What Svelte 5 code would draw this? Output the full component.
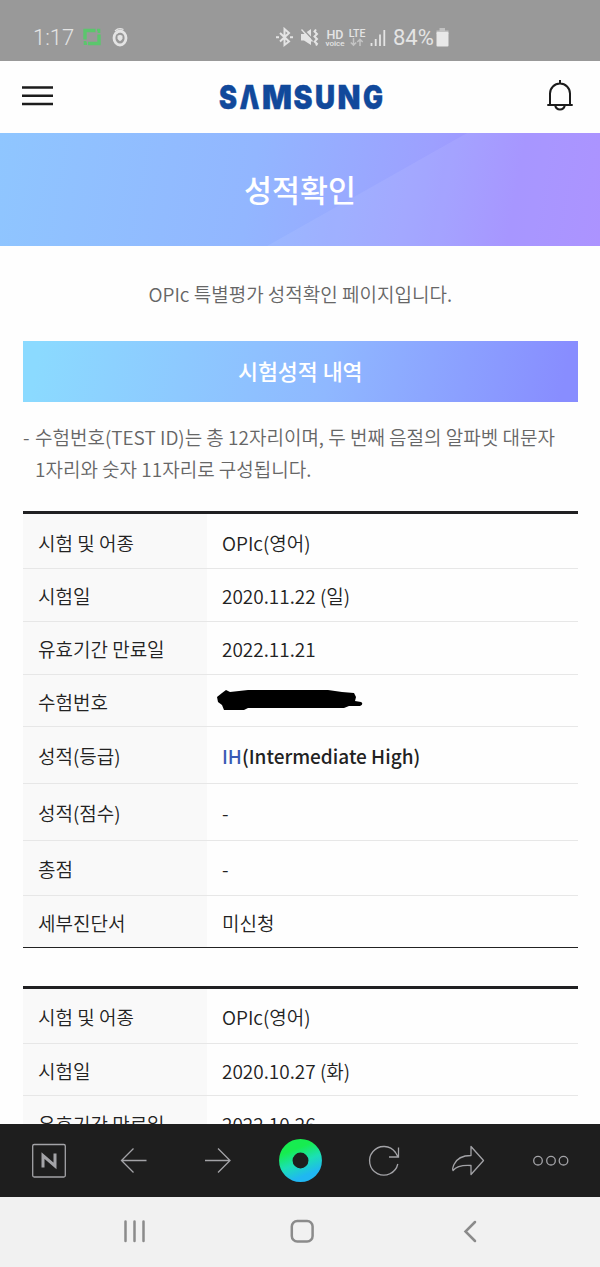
<script>
    // Each result becomes one table, height is the row height in px
    let results = [
        [
            { label: '시험 및 어종', value: 'OPIc(영어)', height: 55 },
            { label: '시험일', value: '2020.11.22 (일)', height: 52.5 },
            { label: '유효기간 만료일', value: '2022.11.21', height: 53 },
            { label: '수험번호', hidden: true, height: 52.5 },
            { label: '성적(등급)', grade: 'IH', value: '(Intermediate High)', height: 56.5 },
            { label: '성적(점수)', value: '-', height: 57 },
            { label: '총점', value: '-', height: 55 },
            { label: '세부진단서', value: '미신청', height: 52.5 }
        ],
        [
            { label: '시험 및 어종', value: 'OPIc(영어)', height: 54.5 },
            { label: '시험일', value: '2020.10.27 (화)', height: 52.5 },
            { label: '유효기간 만료일', value: '2022.10.26', height: 53 }
        ]
    ];
</script>

<div class="screen">
    <div class="status-bar">
        <span class="time">1:17</span>
        <svg class="status-left" width="60" height="22" viewBox="0 0 60 22">
            <path d="M4 12.500V3.500H14.500M7 16.500H18V7.500" fill="none" stroke="#5bc66d" stroke-width="3.400" />
            <path d="M4 14V16.800H6M16 3H18V6" fill="none" stroke="#5bc66d" stroke-width="2.600" />
            <ellipse cx="39" cy="11" rx="6" ry="7" fill="none" stroke="#e4e4e4" stroke-width="2.800" />
            <path d="M34 4C37 1 39 1 42.500 2.500M35.500 6.500C38 4 41 4 43 6" fill="none" stroke="#e4e4e4" stroke-width="1.300" />
            <path d="M36.500 8.700L39 7.700L41.500 8.700V11.500Q41 13.300 39 14.200Q37 13.300 36.500 11.500Z" fill="#e4e4e4" />
        </svg>
        <svg class="status-icons" width="58" height="22" viewBox="0 0 58 22">
            <g fill="none" stroke="#e4e4e4" stroke-width="2">
                <path d="M4 6L13 14.500L8.500 18V2L13 6L4 14.500" />
                <path d="M0 10.200H3M14 10.200H17" />
                <path d="M40 2.500L38.500 4.500L41 7L38.500 9.500L41 12L38.500 14.500L41 17L40 18.500" />
            </g>
            <path d="M25 7H28L35 2V18L28 13.500H25Z" fill="#e4e4e4" />
            <path d="M26.500 1.500L38 14" stroke="#999" stroke-width="1.500" />
            <path d="M25.500 2.500L36.500 14.500" stroke="#e4e4e4" stroke-width="1.300" />
        </svg>
        <div class="hd">
            <b>HD</b>
            <span>voice</span>
        </div>
        <div class="lte">
            <b>LTE</b>
            <svg width="14" height="9" viewBox="0 0 14 9">
                <path d="M3.500 0V7M.8 4.500L3.500 7.200L6.200 4.500M10 8V1.500M7.300 4L10 1.300L12.700 4" fill="none" stroke="#c4c4c4" stroke-width="1.500" />
            </svg>
        </div>
        <svg class="signal" width="16" height="18" viewBox="0 0 16 18">
            <path d="M1.500 14V17M5.700 10V17M10 5.500V17M14.300 1V17" stroke="#e4e4e4" stroke-width="1.800" />
        </svg>
        <span class="percent">84%</span>
        <svg class="battery" width="13" height="19" viewBox="0 0 13 19">
            <path d="M3.500 0H9V2.500H12.500V6H.5V2.500H3.500Z" fill="#c2c2c2" />
            <rect x=".5" y="4" width="12" height="14.500" rx="1" fill="#e8e8e8" />
        </svg>
    </div>

    <header>
        <svg width="32" height="20" viewBox="0 0 32 20">
            <path d="M0 1.500H31M0 9.700H31M0 17.900H31" stroke="#1c1c1c" stroke-width="2.500" />
        </svg>
        <svg class="logo" width="168" height="50" viewBox="0 0 168 50">
            <g class="logo-text" font-size="32.500" fill="#11499b" stroke="#11499b" stroke-width=".4">
                <text x="2" y="37.500" textLength="18" lengthAdjust="spacingAndGlyphs">S</text>
                <text x="22.500" y="37.500" textLength="20" lengthAdjust="spacingAndGlyphs">Λ</text>
                <text x="45" y="37.500" textLength="30" lengthAdjust="spacingAndGlyphs">M</text>
                <text x="76.500" y="37.500" textLength="19" lengthAdjust="spacingAndGlyphs">S</text>
                <text x="98" y="37.500" textLength="20" lengthAdjust="spacingAndGlyphs">U</text>
                <text x="120.500" y="37.500" textLength="23" lengthAdjust="spacingAndGlyphs">N</text>
                <text x="146" y="37.500" textLength="20" lengthAdjust="spacingAndGlyphs">G</text>
            </g>
        </svg>
        <svg class="bell" width="26" height="32" viewBox="0 0 26 32">
            <g fill="none" stroke="#1c1c1c" stroke-width="2">
                <path d="M3 25V13.500A10 10 0 0 1 23 13.500V25M13 0V4M.3 25H25.700" />
                <path d="M8.200 25.500A4.900 4.900 0 0 0 17.800 25.500" />
            </g>
        </svg>
    </header>

    <div class="banner">
        <svg width="600" height="113" viewBox="0 0 600 113">
            <path d="M267 113L467 0H600V113Z" fill="#fff" fill-opacity=".07" />
        </svg>
        <h1>성적확인</h1>
    </div>

    <main>
        <p class="intro">OPIc 특별평가 성적확인 페이지입니다.</p>
        <h2>시험성적 내역</h2>
        <div class="note">
            <span class="dash">-</span>
            <p>수험번호(TEST ID)는 총 12자리이며, 두 번째 음절의 알파벳 대문자<br />1자리와 숫자 11자리로 구성됩니다.</p>
        </div>

        {#each results as rows}
            <div class="result">
                {#each rows as row}
                    <div class="row" style="height: {row.height}px">
                        <div class="label">{row.label}</div>
                        <div class="value" class:strong={row.grade}>
                            {#if row.hidden}
                                <svg class="marker" width="148" height="22" viewBox="0 0 148 22">
                                    <path d="M1 8L6 4L10 1L14 3L32 1H100L112 1L126 3L138 4L140 8L139 12L145 13Q148 15 144 17H133L128 19L32 19L28 21H8L6 16L2 13Z" fill="#000" />
                                </svg>
                            {:else}
                                {#if row.grade}<span class="grade">{row.grade}</span>{/if}{row.value}
                            {/if}
                        </div>
                    </div>
                {/each}
            </div>
        {/each}
    </main>

    <nav class="toolbar">
        <svg width="600" height="73" viewBox="0 0 600 73">
            <defs>
                <linearGradient id="ring" x1=".3" y1="0" x2=".7" y2="1">
                    <stop offset=".1" stop-color="#17ec50" />
                    <stop offset=".55" stop-color="#1be0b5" />
                    <stop offset="1" stop-color="#20b7f2" />
                </linearGradient>
            </defs>
            <g fill="none" stroke="#a3a3a7" stroke-width="1.300">
                <rect x="32.700" y="20.500" width="32.600" height="32.500" rx="1.500" />
                <path d="M146.500 36.500H121.500M133.500 24.500L121.500 36.500L133.500 48.500" />
                <path d="M205 36.500H230M218 24.500L230 36.500L218 48.500" />
                <path d="M397.800 40A14.300 14.300 0 1 1 395.500 28.500L398 32.800M398.500 23.500V33H389" />
                <path d="M471 22.500L483.500 36.500L471 50.500V41.500C463 41 457 41.500 453 46.500Q452 45 454 40.500C457 34 462 31.500 471 31.500Z" stroke-linejoin="round" />
                <circle cx="538" cy="36.700" r="4.300" />
                <circle cx="551" cy="36.700" r="4.300" />
                <circle cx="563.500" cy="36.700" r="4.300" />
            </g>
            <path d="M43 43.500V31.500L55 42V29.500" fill="none" stroke="#a3a3a7" stroke-width="3" />
            <circle cx="300.500" cy="36.500" r="14.700" fill="none" stroke="url(#ring)" stroke-width="13.500" />
        </svg>
    </nav>

    <div class="system-nav">
        <svg width="600" height="70" viewBox="0 0 600 70">
            <g fill="none" stroke="#8b8b8b" stroke-width="2.500" stroke-linecap="round">
                <path d="M125.500 24.500V44M134.500 24.500V44M143.500 24.500V44" />
                <rect x="291.800" y="24" width="20.800" height="20.500" rx="5.500" />
                <path d="M475 25L465.500 34.500L475 44" />
            </g>
        </svg>
    </div>
</div>

<style>
    :global(body) {
        margin: 0;
        background: #fefefe;
    }

    .screen {
        width: 600px;
        height: 1267px;
        display: flex;
        flex-direction: column;
        overflow: hidden;
        font-family: "Noto Sans CJK KR", sans-serif;
        font-weight: 350;
        color: #222;
    }

    .status-bar {
        flex: none;
        height: 61px;
        box-sizing: border-box;
        padding: 14px 0 0 33px;
        display: flex;
        align-items: center;
        background: #999;
        color: #e4e4e4;
        font-family: Roboto, sans-serif;
    }

    .time {
        width: 48px;
        font-size: 22px;
        font-weight: 350;
    }

    .status-icons {
        margin-left: 135px;
    }

    .hd,
    .lte {
        display: flex;
        flex-direction: column;
        align-items: center;
        line-height: 9px;
    }

    .hd {
        width: 20px;
        margin-left: -9px;
        font-size: 8px;
        font-weight: 500;
    }

    .hd b {
        font-size: 12.500px;
        font-weight: 500;
        line-height: 11px;
    }

    .hd span {
        line-height: 7px;
    }

    .lte {
        width: 20px;
        margin-left: 2px;
        font-size: 10.500px;
    }

    .lte b {
        font-weight: 500;
    }

    .signal {
        margin-left: 3px;
    }

    .percent {
        width: 42px;
        margin-left: 7px;
        font-size: 22px;
        font-weight: 400;
    }

    .battery {
        margin-left: 1px;
    }

    header {
        flex: none;
        height: 72px;
        box-sizing: border-box;
        padding: 0 27px 3px 22px;
        display: flex;
        align-items: center;
        justify-content: space-between;
    }

    .logo-text {
        font-family: Inter, sans-serif;
        font-weight: 900;
    }

    .banner {
        flex: none;
        height: 113px;
        display: grid;
        background: linear-gradient(100deg, #8fc6ff 0%, #92b6ff 42%, #9da0ff 70%, #a18fff 85%, #a68bff 100%);
    }

    .banner svg,
    .banner h1 {
        grid-area: 1 / 1;
    }

    h1 {
        margin: 0 0 1px;
        align-self: center;
        text-align: center;
        color: #fff;
        font-size: 30.400px;
        font-weight: 500;
        line-height: 40px;
    }

    main {
        flex: 1;
        min-height: 0;
        overflow: hidden;
        padding: 0 22.500px 0 23px;
    }

    .intro {
        margin: 31px 0;
        text-align: center;
        color: #666;
        font-size: 19px;
        line-height: 33px;
    }

    h2 {
        margin: 0;
        height: 61px;
        text-align: center;
        color: #fff;
        background: linear-gradient(100deg, #8bdaff 3%, #8fb8ff 55%, #888dff 97%);
        font-size: 21.700px;
        font-weight: 500;
        line-height: 60px;
    }

    .note {
        display: flex;
        margin: 19px 0 26px;
        color: #666;
        font-size: 19px;
        line-height: 32px;
        white-space: nowrap;
    }

    .dash {
        width: 12px;
    }

    .note p {
        margin: 0;
    }

    .result {
        border-top: 3px solid #202022;
        margin-bottom: 38px;
    }

    .row {
        display: flex;
        box-sizing: border-box;
        border-bottom: 1.500px solid #e7e7e7;
        font-size: 19px;
    }

    .row:last-child {
        border-bottom-color: #222;
    }

    .label,
    .value {
        display: flex;
        align-items: center;
        box-sizing: border-box;
        padding: 2px 0 0 15px;
    }

    .label {
        width: 184px;
        background: #f9f9f9;
    }

    .strong {
        font-weight: 500;
    }

    .grade {
        color: #3b5bb5;
    }

    .marker {
        margin-left: -6px;
        margin-top: -2px;
    }

    .toolbar {
        flex: none;
        height: 73px;
        background: #1e1e1e;
    }

    .system-nav {
        flex: none;
        height: 70px;
        background: #f1f1f1;
    }
</style>
